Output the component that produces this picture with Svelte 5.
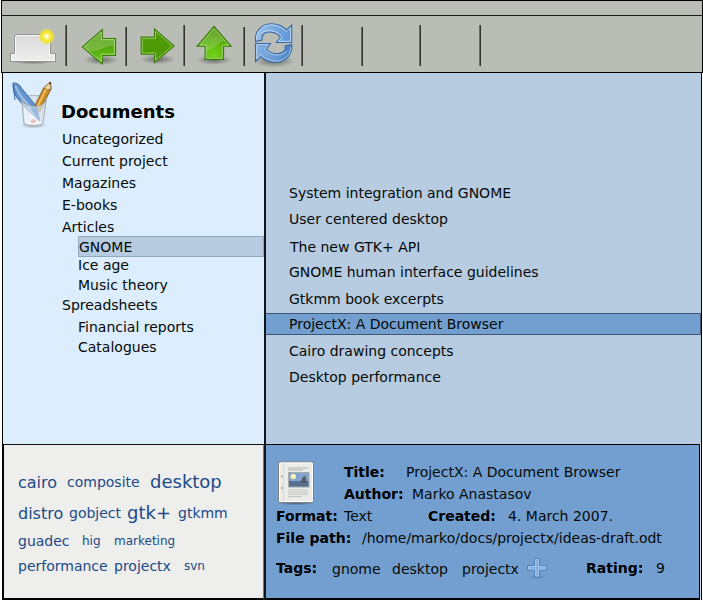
<script>
  const categories = [
    { label: 'Uncategorized', h: 22 },
    { label: 'Current project', h: 22 },
    { label: 'Magazines', h: 22 },
    { label: 'E-books', h: 22 },
    { label: 'Articles', h: 19 },
    { label: 'GNOME', h: 21, sub: true, selected: true },
    { label: 'Ice age', h: 20, sub: true },
    { label: 'Music theory', h: 20, sub: true },
    { label: 'Spreadsheets', h: 22 },
    { label: 'Financial reports', h: 20, sub: true },
    { label: 'Catalogues', h: 20, sub: true }
  ];

  const documents = [
    { label: 'System integration and GNOME', h: 26 },
    { label: 'User centered desktop', h: 28 },
    { label: 'The new GTK+ API', h: 25, nudge: true },
    { label: 'GNOME human interface guidelines', h: 27 },
    { label: 'Gtkmm book excerpts', h: 24 },
    { label: 'ProjectX: A Document Browser', h: 22, selected: true },
    { label: 'Cairo drawing concepts', h: 26 },
    { label: 'Desktop performance', h: 26 }
  ];

  const cloud = [
    [
      { t: 'cairo', w: 49, s: 'md' },
      { t: 'composite', w: 83, s: 'sm' },
      { t: 'desktop', w: 80, s: 'lg' }
    ],
    [
      { t: 'distro', w: 51, s: 'md' },
      { t: 'gobject', w: 58, s: 'sm' },
      { t: 'gtk+', w: 51, s: 'lg' },
      { t: 'gtkmm', w: 60, s: 'sm' }
    ],
    [
      { t: 'guadec', w: 64, s: 'sm' },
      { t: 'hig', w: 32, s: 'xs' },
      { t: 'marketing', w: 80, s: 'xs' }
    ],
    [
      { t: 'performance', w: 96, s: 'sm' },
      { t: 'projectx', w: 70, s: 'sm' },
      { t: 'svn', w: 40, s: 'xs' }
    ]
  ];
</script>

<div class="window">
  <div class="titlebar"></div>
  <div class="toolbar">
    <svg width="64" height="54" viewBox="1 17 64 54">
      <defs>
        <radialGradient id="shade"><stop offset="0" stop-color="#000" stop-opacity=".42" /><stop offset="1" stop-color="#000" stop-opacity="0" /></radialGradient>
        <linearGradient id="paper" x1="0" y1="0" x2="0" y2="1"><stop offset="0" stop-color="#dadada" /><stop offset="1" stop-color="#eee" /></linearGradient>
        <radialGradient id="sun"><stop offset="0" stop-color="#fff" /><stop offset=".22" stop-color="#fffbb0" /><stop offset=".42" stop-color="#f8e83a" /><stop offset=".7" stop-color="#f3e626" stop-opacity=".85" /><stop offset="1" stop-color="#f0e52a" stop-opacity="0" /></radialGradient>
      </defs>
      <ellipse cx="33" cy="61.5" rx="21" ry="3" fill="url(#shade)" />
      <path d="M14.500 53.500V37.500Q14.500 34.500 17.500 34.500H47.500Q50.500 34.500 50.500 37.500V53.500H55.500V61.500H10.500V53.500Z" fill="url(#paper)" stroke="#929292" />
      <path d="M15.500 54V38Q15.500 35.500 18 35.500H47Q49.500 35.500 49.500 38V54.500H54.500V60.500H11.500V54.500H15.500" fill="none" stroke="#fafafa" />
      <circle cx="46.700" cy="36.500" r="8.500" fill="url(#sun)" />
    </svg>
    <i class="sep"></i>
    <svg width="58" height="54" viewBox="67 17 58 54">
      <defs><linearGradient id="gl" x1="0" y1="0" x2="0" y2="1"><stop offset="0" stop-color="#4b970d" /><stop offset=".5" stop-color="#53a50b" /><stop offset="1" stop-color="#68cb15" /></linearGradient></defs>
      <ellipse cx="101" cy="60" rx="18" ry="5" fill="url(#shade)" />
      <path d="M82.500 47L102.300 29.500V38.500H115.500V55.300H102.300V63.700Z" fill="url(#gl)" stroke="#3c7a0c" stroke-width="1.200" />
      <path d="M84 47L101.300 31.800V39.600H114.400V54.200H101.300V61.500Z" fill="none" stroke="#a4dc78" stroke-width="1" />
      <path d="M84.500 47L100.800 33V40.100H113.900V46C105 45 101 52 89 50.800Z" fill="#fff" opacity=".2" />
    </svg>
    <i class="sep short"></i>
    <svg width="56" height="54" viewBox="127 17 56 54">
      <ellipse cx="158" cy="59.500" rx="18" ry="5" fill="url(#shade)" />
      <path d="M174 46L154.500 29V37.200H141.200V54.200H154.500V62.500Z" fill="#4e9a06" stroke="#3c7a0c" stroke-width="1.200" />
      <path d="M172.500 46L155.500 31.200V38.300H142.300V53.100H155.500V60.300Z" fill="none" stroke="#8fd055" stroke-width="1" />
    </svg>
    <i class="sep"></i>
    <svg width="58" height="54" viewBox="185 17 58 54">
      <defs><radialGradient id="gu" cx=".5" cy=".85" r=".65"><stop offset="0" stop-color="#73d216" /><stop offset=".55" stop-color="#5eb40f" /><stop offset="1" stop-color="#4e9a06" /></radialGradient></defs>
      <ellipse cx="214" cy="60" rx="18" ry="5" fill="url(#shade)" />
      <path d="M214 26.500L231 46.200H223.500V59.300H205.200V46.200H197.200Z" fill="url(#gu)" stroke="#3c7a0c" stroke-width="1.200" />
      <path d="M214 28.300L228.700 45.200H222.400V58.200H206.300V45.200H199.500Z" fill="none" stroke="#a0dc6c" stroke-width="1" />
      <path d="M214 29L224 41C218 43 212 50 206.500 51V45H200Z" fill="#fff" opacity=".16" />
    </svg>
    <i class="sep short"></i>
    <svg width="56" height="54" viewBox="245 17 56 54">
      <defs><linearGradient id="bl" x1="0" y1="0" x2="1" y2="0"><stop offset="0" stop-color="#9bc0e8" /><stop offset="1" stop-color="#5c94d3" /></linearGradient>
      <linearGradient id="bl2" x1="0" y1="0" x2="1" y2="0"><stop offset="0" stop-color="#87b2e2" /><stop offset="1" stop-color="#4a82c4" /></linearGradient></defs>
      <ellipse cx="274" cy="61" rx="21" ry="6.500" fill="url(#shade)" />
      <path d="M255.500 41.500C254.500 32 261 24 271 23.800C279 23.600 283 26.500 286.500 30L291.700 25V42.500H276.300L280.500 37C276 31.500 267 30.500 263.500 34C261.500 36 262 38.500 262 40Z" fill="url(#bl)" stroke="#3768a8" stroke-width="1.100" />
      <path d="M256.500 39.500C256 32 262.500 25 271 24.900C279 24.800 283.500 29 286.500 31.500L290.600 27.500V41.400H278.500L281.900 37C277 30 266 28.500 261.500 33.500" fill="none" stroke="#c9def5" stroke-width=".9" />
      <path d="M291.800 44.500C292.800 54 286 61.900 276.500 62.200C269 62.400 264.500 60 260.500 56.500L255.500 61.500V43.500H270.500L266.500 49C271 54.500 279.500 55 283.800 51.500C285.500 50 285.500 47.500 285.200 46Z" fill="url(#bl2)" stroke="#3768a8" stroke-width="1.100" />
      <path d="M290.800 47C291 54.500 284.500 61 276.500 61.100C269 61.200 264.500 58.500 260.500 55L256.600 59V44.600H268.500L265 49C270 56 281 57 286.500 51.500" fill="none" stroke="#b5d2f2" stroke-width=".9" />
    </svg>
    <i class="sep"></i><span class="slot wide"></span>
    <i class="sep short"></i><span class="slot"></span>
    <i class="sep"></i><span class="slot wide"></span>
    <i class="sep"></i>
  </div>

  <div class="body">
    <div class="left">
      <nav>
        <header>
          <svg width="46" height="52" viewBox="8 79 46 52">
            <defs><linearGradient id="glass" x1="0" y1="0" x2="1" y2="0"><stop offset="0" stop-color="#d0d5da" stop-opacity=".8" /><stop offset=".4" stop-color="#fff" stop-opacity=".6" /><stop offset="1" stop-color="#ccd1d6" stop-opacity=".75" /></linearGradient></defs>
            <ellipse cx="33.500" cy="125.500" rx="14" ry="3" fill="url(#shade)" opacity=".7" />
            <path d="M21.500 98Q33 92.500 46.500 98L43 107H24Z" fill="#d9e2ea" stroke="#a6abb0" stroke-width=".8" />
            <path d="M50.500 82L51 89L39.500 112L33 109.500L43.500 88Z" fill="#c88a25" stroke="#76501a" stroke-width=".8" />
            <path d="M46.500 88.500L36.500 108.500" stroke="#f0c36b" stroke-width="1.700" />
            <path d="M43.800 87.500L50.500 82L51 89L47.500 90Z" fill="#e8d3a5" stroke="#76501a" stroke-width=".6" />
            <path d="M48.800 83.400L50.600 82L50.800 84.800Z" fill="#332b20" />
            <path d="M13 83Q18.500 82.500 21.800 88.500L37 107L40 121L28.500 111L17 98Q12 91 13 83Z" fill="#6493cd" stroke="#3465a4" stroke-width=".9" />
            <path d="M15.500 86Q17.500 92 22 97.500L31.500 108.500" fill="none" stroke="#9fc1e8" stroke-width="2" />
            <path d="M13.200 85L15 100" stroke="#3465a4" stroke-width="1" />
            <path d="M21.500 98L24 124Q33 128 43 124L46.500 98Q45 106.500 34 106.500Q23.500 106.500 21.500 98Z" fill="url(#glass)" stroke="#a2a6aa" stroke-width=".9" />
            <path d="M29.500 107.500L39.500 121L37 107.500Z" fill="#8db2dd" opacity=".75" />
            <circle cx="33" cy="121.500" r="2.500" fill="#e9a5a2" opacity=".7" />
            <path d="M24.500 108L26 122Q33 125 41 122.500" fill="none" stroke="#fff" stroke-width="1" />
          </svg>
          <h1>Documents</h1>
        </header>
        {#each categories as c}
          <div class="cat" class:sub={c.sub} class:selected={c.selected} style:height="{c.h}px"><span>{c.label}</span></div>
        {/each}
      </nav>
      <section class="cloud">
        {#each cloud as row}
          <div class="line">
            {#each row as tag}<span class={tag.s} style:width="{tag.w}px">{tag.t}</span>{/each}
          </div>
        {/each}
      </section>
    </div>

    <div class="right">
      <div class="docs">
        {#each documents as d}
          <div class="doc" class:selected={d.selected} class:nudge={d.nudge} style:height="{d.h}px">{d.label}</div>
        {/each}
      </div>
      <section class="details">
        <div class="top">
          <svg width="46" height="48" viewBox="272 459 46 48">
            <ellipse cx="296" cy="503" rx="18" ry="2.500" fill="url(#shade)" />
            <rect x="278.500" y="462" width="35" height="40.500" rx="1.500" fill="#ebebe9" stroke="#80817e" />
            <rect x="279.500" y="463" width="33" height="38.500" rx="1" fill="none" stroke="#fff" />
            <path d="M283.500 463V502" stroke="#d2d2cf" stroke-width=".8" />
            <path d="M281 476.500h2M281 488h2" stroke="#a7a7a4" stroke-width="1.500" />
            <path d="M288 468h20M288 470h15" stroke="#c5c5c2" stroke-width="1.500" />
            <path d="M288 490h20M288 492.200h20M288 494.400h20M288 496.600h14" stroke="#c8c8c5" stroke-width="1.200" />
            <rect x="288.500" y="472.500" width="20.500" height="14.500" fill="#7fa3cc" stroke="#a9aba8" />
            <rect x="289" y="481" width="19.500" height="5.500" fill="#596f91" />
            <path d="M300 482.500L303.500 476.500L305.500 476L306.500 483Z" fill="#555c66" />
            <circle cx="293.300" cy="476.500" r="2.700" fill="#f5f3b4" />
          </svg>
          <div class="lines">
            <div class="line"><b class="w-title">Title:</b><span>ProjectX: A Document Browser</span></div>
            <div class="line"><b class="w-author">Author:</b><span>Marko Anastasov</span></div>
          </div>
        </div>
        <div class="line"><b class="w-format">Format:</b><span class="w-text">Text</span><b class="w-created">Created:</b><span>4. March 2007.</span></div>
        <div class="line"><b class="w-path">File path:</b><span>/home/marko/docs/projectx/ideas-draft.odt</span></div>
        <div class="line tags">
          <b class="w-tags">Tags:</b><span class="tag w-gnome">gnome</span><span class="tag w-desktop">desktop</span><span class="tag w-projectx">projectx</span>
          <svg width="24" height="24" viewBox="525 556 24 24">
            <ellipse cx="537" cy="577" rx="9" ry="2" fill="url(#shade)" opacity=".5" />
            <path d="M534.500 558.500h5v7h7v4.500h-7v7h-5v-7h-7v-4.500h7Z" fill="#85b0e0" stroke="#4c7fbd" />
            <path d="M535.500 559.500h3v7h7v2.500h-7v7h-3v-7h-7v-2.500h7Z" fill="none" stroke="#a9c9ec" stroke-width=".9" />
          </svg>
          <b class="w-rating">Rating:</b><span>9</span>
        </div>
      </section>
    </div>
  </div>
</div>

<style>
  :global(body) { margin: 0; background: #fff; }
  .window {
    width: 703px; height: 600px; box-sizing: border-box; overflow: hidden;
    display: flex; flex-direction: column;
    font: 14px/20px "DejaVu Sans", sans-serif; color: #050a08; white-space: nowrap;
  }
  .titlebar, .toolbar { box-sizing: border-box; margin-left: 1px; border-left: 1px solid #000; border-right: 1px solid #000; background: #babdb6; flex: none; }
  .titlebar { height: 16px; border-top: 1px solid #000; border-bottom: 1px solid #1c1e1b; background: linear-gradient(#bdb7b9, #babdb6 4px); }
  .toolbar { height: 57px; display: flex; border-bottom: 1px solid #000; padding-top: 1px; }
  .toolbar svg:first-child { margin-left: -1px; }
  svg { display: block; flex: none; }
  .sep { width: 2px; height: 41px; margin-top: 8px; flex: none; background: linear-gradient(90deg, #686a66 50%, #31332f 50%); }
  .sep.short { height: 39px; margin-top: 10px; }
  .slot { width: 56px; }
  .slot.wide { width: 58px; }

  .body { display: flex; height: 527px; flex: none; padding-left: 2px; }
  .left { width: 261px; border-left: 1px solid #000; border-right: 2px solid #101318; flex: none; }
  nav { height: 371px; background: #dcedfd; }
  header { display: flex; height: 56px; }
  header svg { margin: 6px 0 0 5px; }
  h1 { margin: 28px 0 0 7px; font-size: 18px; line-height: 22px; font-weight: bold; color: #000; }
  .cat { box-sizing: border-box; padding-left: 59px; }
  .sub { padding-left: 75px; }
  .cat.selected { margin: 0 0 -2px 75px; padding-left: 0; border: 1px solid #92a8c0; background: #b7cbe1; line-height: 20px; }
  .cloud { box-sizing: border-box; height: 156px; border-top: 1px solid #111; border-left: 1px solid #000; border-bottom: 2px solid #000; border-right: 1px solid #777; background: #eeeeec; color: #204a87; padding: 27px 0 0 14px; }
  .cloud .line { display: flex; height: 31px; }
  .cloud .line:nth-child(2) { height: 28px; }
  .cloud .line:nth-child(3) { height: 25px; }
  .lg { font-size: 18px; }
  .md { font-size: 16px; margin-top: 1px; }
  .xs { font-size: 12px; }

  .right { width: 435px; flex: none; border-right: 1px solid #000; background: #dde3ea; }
  .docs { height: 371px; box-sizing: border-box; padding-top: 110px; background: #b7cbe1; }
  .doc { box-sizing: border-box; padding-left: 23px; }
  .doc.nudge { padding-left: 24px; }
  .doc.selected { background: #729fcf; border: 1px solid #3f5874; border-left: 0; line-height: 20px; margin-bottom: 6px; }
  .details { box-sizing: border-box; width: 434px; height: 156px; background: #729fcf; border: 1px solid #000; border-left: 0; border-bottom-width: 2px; padding: 17px 0 0 10px; }
  .details .line { display: flex; height: 22px; }
  .top { display: flex; height: 44px; }
  .top svg { margin: -3px 26px 0 -4px; }
  b { color: #000; }
  .w-title { width: 62px; }
  .w-author { width: 68px; }
  .w-format { width: 68px; }
  .w-text { width: 84px; }
  .w-created { width: 80px; }
  .w-path { width: 86px; }
  .details .tags { margin-top: 8px; }
  .w-tags { width: 56px; }
  .tag { margin-top: 1px; }
  .w-gnome { width: 60px; }
  .w-desktop { width: 70px; }
  .w-projectx { width: 63px; }
  .tags svg { margin-top: -2px; }
  .w-rating { width: 70px; margin-left: 37px; }
</style>
